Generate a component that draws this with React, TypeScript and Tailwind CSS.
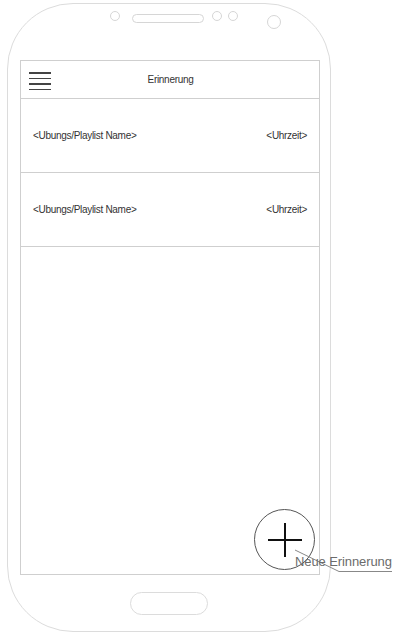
import React from "react";

const font = { fontFamily: '"Liberation Sans", Arial, sans-serif' };

const Reminder = ({ name, time }: { name: string; time: string }) => (
  <div className="flex h-[74px] items-center justify-between border-b border-[#cfcfcf] pl-[12px] pr-[12px] text-[10px] tracking-[-0.3px] text-[#333]">
    <span>{name}</span>
    <span>{time}</span>
  </div>
);

const App = () => {
  return (
    <div className="relative h-[639px] w-[400px] overflow-hidden bg-white" style={font}>
      {/* Phone body */}
      <div className="ml-[7px] mt-[3px] flex h-[629px] w-[324px] flex-col rounded-[66px] border border-[#dcdcdc]">
        {/* Speaker / sensors */}
        <div className="flex h-[56px] items-start pl-[102px]">
          <div className="mt-[7px] h-[10px] w-[10px] rounded-full border border-[#d6d6d6]" />
          <div className="ml-[12px] mt-[10px] h-[9px] w-[72px] rounded-full border border-[#d6d6d6]" />
          <div className="ml-[8px] mt-[7px] h-[10px] w-[10px] rounded-full border border-[#d6d6d6]" />
          <div className="ml-[6px] mt-[7px] h-[10px] w-[10px] rounded-full border border-[#d6d6d6]" />
          <div className="ml-[29px] mt-[11px] h-[14px] w-[14px] rounded-full border border-[#d6d6d6]" />
        </div>

        {/* Screen */}
        <div className="relative ml-[12px] flex h-[515px] w-[300px] flex-col border border-[#cfcfcf]">
          <div className="relative flex h-[38px] items-center justify-center border-b border-[#cfcfcf]">
            <div className="absolute left-[8px] top-[11px] flex w-[22px] flex-col gap-[4px]">
              <div className="h-[1.5px] bg-[#444]" />
              <div className="h-[1.5px] bg-[#444]" />
              <div className="h-[1.5px] bg-[#444]" />
              <div className="h-[1.5px] bg-[#444]" />
            </div>
            <span className="pl-[1px] text-[10px] tracking-[-0.3px] text-[#333]">Erinnerung</span>
          </div>
          <Reminder name="<Ubungs/Playlist Name>" time="<Uhrzeit>" />
          <Reminder name="<Ubungs/Playlist Name>" time="<Uhrzeit>" />

          {/* Floating add button */}
          <div className="absolute left-[233px] top-[448px] flex h-[61px] w-[61px] items-center justify-center rounded-full border border-[#555] bg-white">
            <svg width="36" height="36" viewBox="0 0 36 36">
              <path d="M18 1V35M1 18H35" stroke="#111" strokeWidth="2" />
            </svg>
          </div>
        </div>

        {/* Home button */}
        <div className="ml-[122px] mt-[17px] h-[23px] w-[78px] rounded-full border border-[#dcdcdc]" />
      </div>

      {/* Annotation */}
      <svg className="absolute left-0 top-0" width="400" height="639">
        <path d="M295 550L339 571.5H392" fill="none" stroke="#888" strokeWidth="1" />
      </svg>
      <span className="absolute left-[295px] top-[554px] text-[13px] leading-[15px] tracking-[-0.1px] text-[#6b6b6b]">
        Neue Erinnerung
      </span>
    </div>
  );
};

export default App;
